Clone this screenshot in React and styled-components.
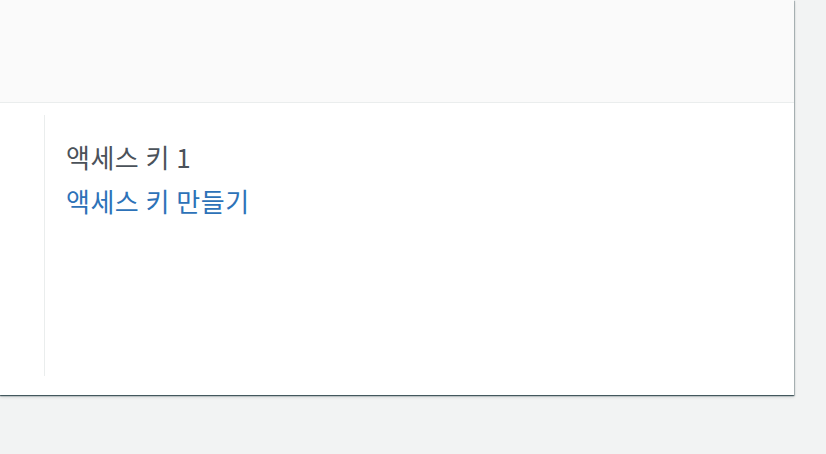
import React from 'react';
import styled, { createGlobalStyle } from 'styled-components';

const GlobalStyle = createGlobalStyle`
  html, body {
    margin: 0;
    padding: 0;
    background: #f2f3f3;
  }
  body {
    font-family: "Noto Sans CJK KR", "Noto Sans", sans-serif;
  }
`;

const PageSC = styled.div`
  width: 826px;
  height: 454px;
  overflow: hidden;
`;

const CardSC = styled.div`
  width: 794px;
  background: #fff;
  box-shadow: 0 1px 1px 0 rgba(0, 28, 36, 0.5), 1px 1px 1px 0 rgba(0, 28, 36, 0.2), -1px 1px 1px 0 rgba(0, 28, 36, 0.2), 0 2px 3px 0 rgba(0, 28, 36, 0.15);
`;

const HeaderSC = styled.div`
  height: 102px;
  background: #fafafa;
  border-bottom: 1px solid #eaeded;
`;

const BodySC = styled.div`
  display: grid;
  grid-template-columns: 44px 1fr;
  padding: 12px 0 19px;
`;

const ColumnSC = styled.div`
  height: 261px;
  border-left: 1px solid #eaeded;
  padding: 27px 0 0 21px;
  box-sizing: border-box;
`;

const TitleSC = styled.div`
  font-size: 26px;
  line-height: 30px;
  font-weight: 400;
  letter-spacing: 0.5px;
  color: #4b525a;
`;

const LinkSC = styled.a`
  display: block;
  margin-top: 14px;
  font-size: 26px;
  line-height: 30px;
  letter-spacing: 0.5px;
  color: #2d72b8;
  text-decoration: none;
  cursor: pointer;
`;

const App = () => (
  <PageSC>
    <GlobalStyle />
    <CardSC>
      <HeaderSC />
      <BodySC>
        <div />
        <ColumnSC>
          <TitleSC>액세스 키 1</TitleSC>
          <LinkSC>액세스 키 만들기</LinkSC>
        </ColumnSC>
      </BodySC>
    </CardSC>
  </PageSC>
);

export default App;
